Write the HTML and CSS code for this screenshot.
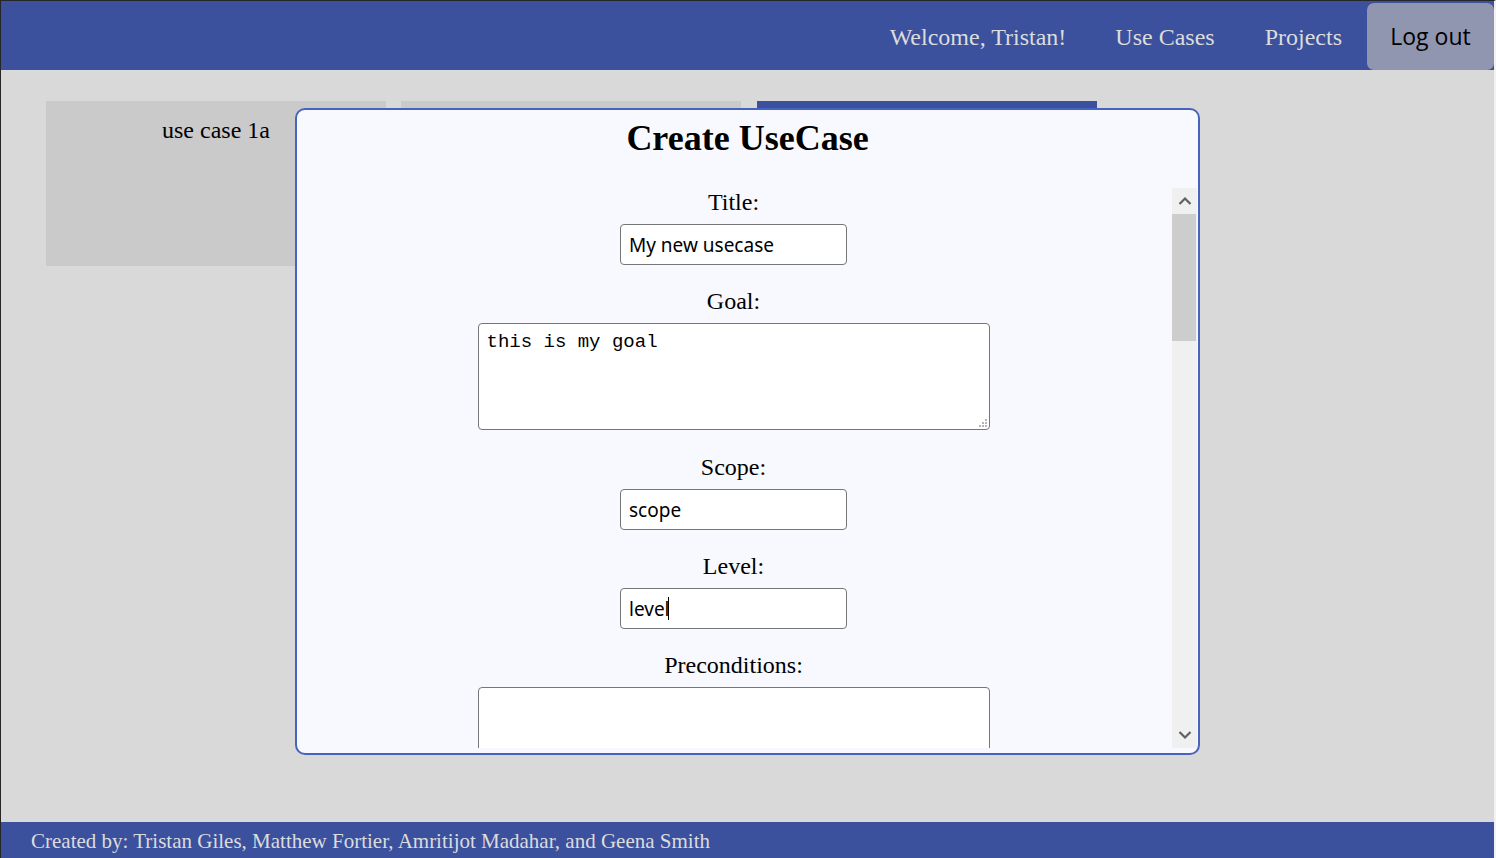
FILE: index.html
```html
<!DOCTYPE html>
<html lang="en">
<head>
<meta charset="utf-8">
<title>Use Cases</title>
<link rel="stylesheet" href="styles.css">
</head>
<body>
<header class="topbar">
  <nav class="nav">
    <a class="nav-link" href="#">Welcome, Tristan!</a>
    <a class="nav-link" href="#">Use Cases</a>
    <a class="nav-link" href="#">Projects</a>
    <button class="logout" type="button">Log out</button>
  </nav>
</header>
<main class="content">
  <div class="cards">
    <div class="card"><span class="card-title">use case 1a</span></div>
    <div class="card"><span class="card-title">use case 1b</span></div>
    <div class="card card-active"><span class="card-title">use case 1c</span></div>
  </div>
  <div class="modal">
    <h2 class="modal-title">Create UseCase</h2>
    <div class="modal-body">
      <form class="form">
        <div class="field">
          <label class="label" for="title">Title:</label>
          <input class="text-input" id="title" type="text" value="My new usecase">
        </div>
        <div class="field">
          <label class="label" for="goal">Goal:</label>
          <div class="area-wrap">
            <textarea class="text-area" id="goal">this is my goal</textarea>
            <svg class="grip" width="10" height="10" viewBox="0 0 10 10"><g fill="#b5b5b5"><rect x="7" y="1" width="2" height="2"/><rect x="4" y="4" width="2" height="2"/><rect x="7" y="4" width="2" height="2"/><rect x="1" y="7" width="2" height="2"/><rect x="4" y="7" width="2" height="2"/><rect x="7" y="7" width="2" height="2"/></g></svg>
          </div>
        </div>
        <div class="field field-wide-gap">
          <label class="label" for="scope">Scope:</label>
          <input class="text-input" id="scope" type="text" value="scope">
        </div>
        <div class="field">
          <label class="label" for="level">Level:</label>
          <div class="input-wrap">
            <input class="text-input" id="level" type="text" value="level">
            <span class="caret"></span>
          </div>
        </div>
        <div class="field">
          <label class="label" for="pre">Preconditions:</label>
          <textarea class="text-area" id="pre"></textarea>
        </div>
      </form>
      <div class="scrollbar">
        <div class="sb-btn">
          <svg width="14" height="10" viewBox="0 0 14 10"><path d="M1.5 8 L7 2.5 L12.5 8" fill="none" stroke="#606060" stroke-width="2.2"/></svg>
        </div>
        <div class="sb-track">
          <div class="sb-thumb"></div>
        </div>
        <div class="sb-btn">
          <svg width="14" height="10" viewBox="0 0 14 10"><path d="M1.5 2 L7 7.5 L12.5 2" fill="none" stroke="#606060" stroke-width="2.2"/></svg>
        </div>
      </div>
    </div>
  </div>
</main>
<footer class="footer">
  <p class="footer-text">Created by: Tristan Giles, Matthew Fortier, Amritijot Madahar, and Geena Smith</p>
</footer>
</body>
</html>
```

FILE: styles.css
```css
* { box-sizing: border-box; }

html, body { height: 100%; }

body {
  margin: 0;
  height: 858px;
  display: flex;
  flex-direction: column;
  border-top: 1px solid #262626;
  border-left: 1px solid #262626;
  border-right: 2px solid #f2f2f2;
  background: #d9d9d9;
  font-family: "Liberation Serif", "Times New Roman", serif;
  overflow: hidden;
}

.topbar {
  height: 69px;
  flex: 0 0 69px;
  background: #3b519d;
  display: flex;
  justify-content: flex-end;
}

.nav {
  display: flex;
  align-items: stretch;
  padding-top: 2px;
}

.nav-link {
  display: flex;
  align-items: center;
  padding: 2px 25px 0;
  font-size: 24px;
  color: #dcdcdc;
  text-decoration: none;
}

.nav-link:first-child { padding-right: 24px; }
.nav-link:last-of-type { padding-right: 25px; }

.logout {
  width: 127px;
  border: none;
  border-radius: 7px;
  background: #9196b0;
  color: #000;
  font-family: "Open Sans", "Noto Sans", sans-serif;
  font-size: 23px;
  padding: 0 0 2px;
  cursor: pointer;
}

.content {
  flex: 1;
  position: relative;
  background: #d9d9d9;
}

.cards {
  display: flex;
  gap: 15px;
  padding: 31px 0 0 45px;
}

.card {
  width: 340px;
  height: 165px;
  background: #cacaca;
  display: flex;
  justify-content: center;
  padding-top: 16px;
}

.card-active {
  background: #3b519d;
  margin-left: 1px;
}

.card-title {
  font-size: 24px;
  color: #000;
  line-height: 27px;
}

.modal {
  position: absolute;
  left: 294px;
  top: 38px;
  width: 905px;
  height: 647px;
  border: 2px solid #4862bf;
  border-radius: 10px;
  background: #f7f9fe;
  display: flex;
  flex-direction: column;
  padding: 10px 0 5px 0;
}

.modal-title {
  margin: 0 0 31px;
  text-align: center;
  font-size: 36px;
  line-height: 37px;
  font-weight: bold;
  color: #000;
}

.modal-body {
  flex: 1;
  display: flex;
  min-height: 0;
  overflow: hidden;
}

.form {
  flex: 1;
  display: flex;
  flex-direction: column;
  align-items: center;
  padding: 2px 2px 0 0;
  overflow: hidden;
}

.field {
  display: flex;
  flex-direction: column;
  align-items: center;
  margin-bottom: 24px;
}

.field-wide-gap { margin-top: 1px; }

.label {
  font-size: 24px;
  line-height: 25px;
  margin-bottom: 9px;
  color: #000;
}

.input-wrap,
.area-wrap { position: relative; }

.text-input {
  width: 227px;
  height: 41px;
  border: 1px solid #767676;
  border-radius: 4px;
  background: #fff;
  padding: 0 8px;
  font-family: "Noto Sans", "Open Sans", sans-serif;
  font-size: 19px;
  color: #000;
  outline: none;
}

.caret {
  position: absolute;
  left: 48px;
  top: 9px;
  width: 1px;
  height: 23px;
  background: #000;
}

.text-area {
  display: block;
  width: 512px;
  height: 107px;
  border: 1px solid #767676;
  border-radius: 4px;
  background: #fff;
  padding: 7px 8px;
  font-family: "Liberation Mono", "Courier New", monospace;
  font-size: 19px;
  line-height: 22px;
  color: #000;
  outline: none;
  resize: none;
  flex: 0 0 auto;
}

.grip {
  position: absolute;
  right: 2px;
  bottom: 2px;
}

.scrollbar {
  width: 25px;
  flex: 0 0 25px;
  margin-right: 1px;
  background: #f0f0f0;
  display: flex;
  flex-direction: column;
}

.sb-btn {
  height: 26px;
  display: flex;
  align-items: center;
  justify-content: center;
}

.sb-track {
  flex: 1;
}

.sb-thumb {
  height: 127px;
  width: 24px;
  background: #cdcdcd;
}

.footer {
  flex: 0 0 36px;
  height: 36px;
  background: #3b519d;
  display: flex;
  align-items: center;
  padding-left: 30px;
  padding-top: 2px;
}

.footer-text {
  margin: 0;
  font-size: 21px;
  color: #dcdcdc;
}
```
